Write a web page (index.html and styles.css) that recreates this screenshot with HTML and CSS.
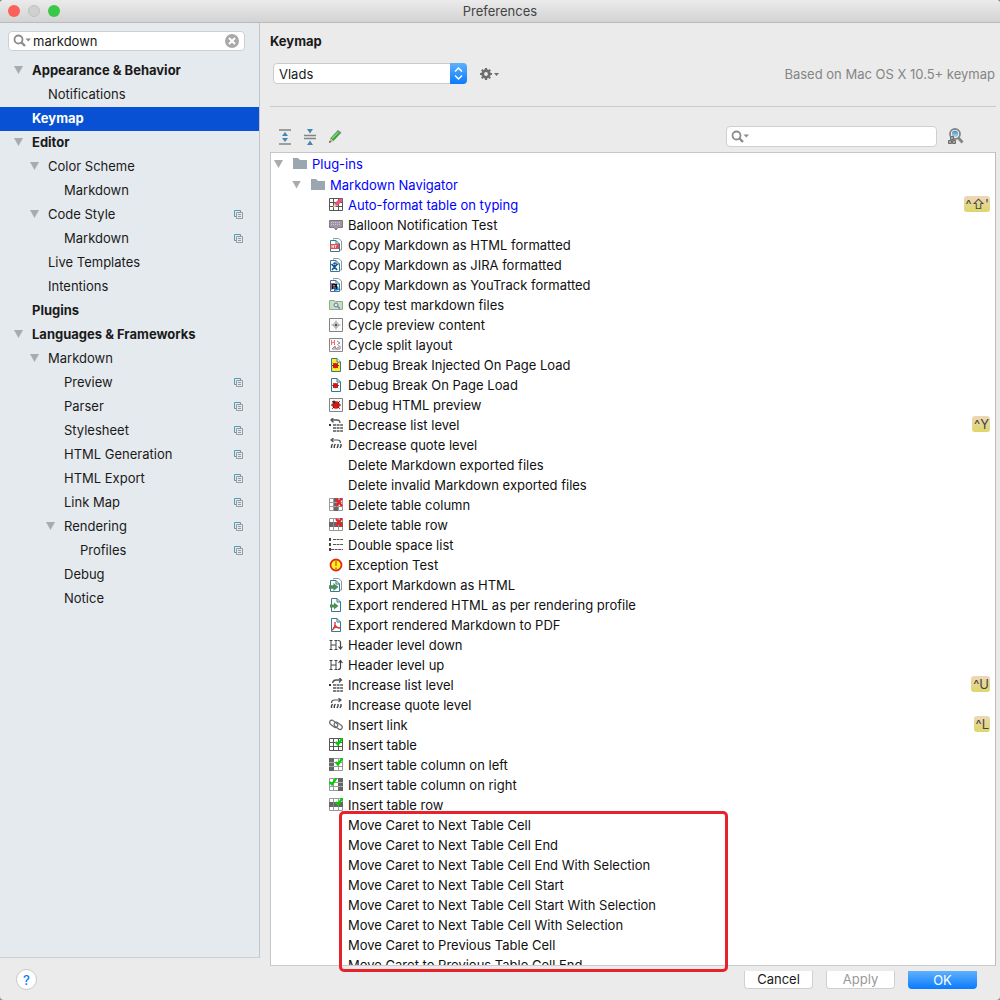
FILE: index.html
```html
<!DOCTYPE html>
<html lang="en">
<head>
<meta charset="utf-8">
<title>Preferences</title>
<link rel="stylesheet" href="styles.css">
</head>
<body>
<svg class="sprite" aria-hidden="true">
  <defs>
    <linearGradient id="lens" x1="0" y1="0" x2="0" y2="1"><stop offset="0" stop-color="#3f90c4"/><stop offset="1" stop-color="#b5dcf2"/></linearGradient>
  </defs>
  <symbol id="search" viewBox="0 0 18 14"><circle cx="5.5" cy="5.5" r="4" fill="none" stroke="#8c8c8c" stroke-width="1.800"/><path d="M8.500 8.500 12 12" stroke="#8c8c8c" stroke-width="2.400"/><path d="M12.500 4.500H18l-2.700 3z" fill="#8c8c8c"/></symbol>
  <symbol id="folder" viewBox="0 0 14 12"><path d="M0 0h5l2 2h7v9H0z" fill="#9aa7b0"/></symbol>
  <symbol id="copy" viewBox="0 0 9 9"><path d="M2 6.500H.5v-6h6V2" fill="none" stroke="#4f9dc0"/><path d="M2.500 2.500h6v6h-6zM4 4.500h3M4 6.500h3" fill="none" stroke="#9a9a9a"/></symbol>
  <symbol id="grid" viewBox="0 0 14 14"><path d="M.5.5h13v12H.5zM0 4.500h14M0 8.500h14M4.500 0v13M9.500 0v13" fill="none" stroke="#555"/></symbol>
  <symbol id="table-edit" viewBox="0 0 14 14"><use href="#grid"/><path d="m4 9 1.500-3.500L11 0l3 2.500L8 8z" fill="#e2557f"/><path d="m4 9.500 1.500-4L8 8z" fill="#f3c79b"/></symbol>
  <symbol id="balloon" viewBox="0 0 14 14"><path d="M.5 2.500h13v7H9L7 12 5 9.500H.5z" fill="#a295a6" stroke="#7b7b7b"/><path d="M2 4.500h10M2 6.500h10" stroke="#cfc3d2" stroke-dasharray="1 1"/></symbol>
  <symbol id="pages" viewBox="0 0 14 14"><path d="M4.500 1.500v-1h5L12.500 3v9H11" fill="#fff" stroke="#8a9aa2"/><path d="M1.500 2.500H7L10.500 6v7.500h-9z" fill="#fff" stroke="#35788f"/><path d="M7 2.500V6h3.500" fill="none" stroke="#35788f"/></symbol>
  <symbol id="page" viewBox="0 0 14 14"><path d="M2.500.5H8L11.500 4v9.500h-9z" fill="#fff" stroke="#35788f"/><path d="M8 .5V4h3.500" fill="none" stroke="#35788f"/></symbol>
  <symbol id="copy-html" viewBox="0 0 14 14"><use href="#pages"/><path d="M1 6h9v5H1z" fill="#dc5050"/><path d="M3 7v3m0-1.500h1.500M4.500 7v3m1-2.500h2m-1 0V10" stroke="#fff" stroke-width=".7"/></symbol>
  <symbol id="copy-jira" viewBox="0 0 14 14"><use href="#pages"/><path d="m2.500 6 3 3 3-3M5.500 9 3 12m2.500-3L8 12M5.500 7v4" stroke="#1f4f95" stroke-width="1.700" fill="none"/><circle cx="5.500" cy="5.500" r="1.200" fill="#1f4f95"/></symbol>
  <symbol id="copy-yt" viewBox="0 0 14 14"><use href="#pages"/><path d="M2 5h4l1 5-5 2z" fill="#e03ca0"/><path d="m5 10 4-2 1 4-5 1z" fill="#1679de"/><path d="M3 6h5v5H3z" fill="#111"/><path d="m4 7 1 1.500L6 7m-2 3h3" stroke="#fff" stroke-width=".6" fill="none"/></symbol>
  <symbol id="copy-test" viewBox="0 0 14 14"><path d="M.5 2.500H5l1.500 1h7v8H.5z" fill="#c9dfc4" stroke="#8ab08a"/><circle cx="7" cy="7" r="2" fill="#dce7f8" stroke="#6776a8"/><path d="m8.500 8.500 2.500 2" stroke="#6776a8" stroke-width="1.300"/></symbol>
  <symbol id="frame" viewBox="0 0 14 14"><path d="M.5.5h13v13H.5z" fill="#fafafa" stroke="#858585"/></symbol>
  <symbol id="preview" viewBox="0 0 14 14"><use href="#frame"/><circle cx="7" cy="7" r="2.500" fill="none" stroke="#aaa"/><circle cx="7" cy="7" r="1.500" fill="#555"/><path d="M7 2.500v2m0 5v2M2.500 7h2m5 0h2" stroke="#999"/></symbol>
  <symbol id="split" viewBox="0 0 14 14"><use href="#frame"/><path d="M2.500 7V2m0 3 3-1m0 3V2" stroke="#f06a78" fill="none"/><path d="m8 3 3 2-2 1m-6 5 3-3 1 3 4-3v3H3" fill="none" stroke="#7d8c99"/><path d="m5 9 4 3m-1-6 3 3" stroke="#e58b8b"/></symbol>
  <symbol id="bug" viewBox="0 0 8 8"><ellipse cx="4" cy="4" rx="3" ry="3" fill="#d81818"/><path d="m1 1 1.500 1.500M7 1 5.500 2.500M0 4h2m4 0h2M1 7l1.500-1.500M7 7 5.500 5.500" stroke="#6b0d0d" stroke-width=".8"/></symbol>
  <symbol id="debug-inj" viewBox="0 0 14 14"><path d="M2.500.5H8L11.500 4v9.500h-9z" fill="#fdee28" stroke="#35788f"/><path d="M8 .5V4h3.500" fill="#fff" stroke="#35788f"/><use href="#bug" x="3" y="4" width="7" height="7"/></symbol>
  <symbol id="debug-page" viewBox="0 0 14 14"><use href="#page"/><use href="#bug" x="3" y="4" width="7" height="7"/></symbol>
  <symbol id="debug-html" viewBox="0 0 14 14"><use href="#frame"/><use href="#bug" x="2" y="2" width="10" height="10"/><circle cx="5" cy="4" r="1.500" fill="#333"/></symbol>
  <symbol id="lines" viewBox="0 0 14 14"><path d="M0 6h2v2H0z" fill="#333"/><path d="M4 7h10M4 10h10M4 13h10" stroke="#555" stroke-width="1.400" stroke-dasharray="3 .6"/></symbol>
  <symbol id="list-dec" viewBox="0 0 14 14"><use href="#lines"/><path d="M11 5C11 3 10 2 8 2H2M4.500-.5 2 2l2.500 2.500" fill="none" stroke="#555" stroke-width="1.300"/></symbol>
  <symbol id="list-inc" viewBox="0 0 14 14"><use href="#lines"/><path d="M3.500 5C4 3 5 2 7 2h5.500M10-.5 12.500 2 10 4.500" fill="none" stroke="#555" stroke-width="1.300"/></symbol>
  <symbol id="quotes" viewBox="0 0 14 14"><path d="M3.500 6 2.500 8v2M6.300 6l-1 2v2M9 6v2L8 10M12 6v2l-1 2" fill="none" stroke="#444" stroke-width="1.400"/></symbol>
  <symbol id="quote-dec" viewBox="0 0 14 14"><use href="#quotes"/><path d="M11.500 5c0-2-1-3-3-3H2M4.500 0 2 2l2.500 2" fill="none" stroke="#555" stroke-width="1.200"/></symbol>
  <symbol id="quote-inc" viewBox="0 0 14 14"><use href="#quotes"/><path d="M2.500 5c0-2 1-3 3-3H12M9.500 0 12 2 9.500 4" fill="none" stroke="#555" stroke-width="1.200"/></symbol>
  <symbol id="table-light" viewBox="0 0 14 14"><path d="M.5.5h13v12H.5zM0 4.500h14M0 8.500h14M4.500 0v13M9.500 0v13" fill="#fff" stroke="#999"/></symbol>
  <symbol id="cross" viewBox="0 0 8 9"><path d="m1 1 6 7M7 0 1 8" stroke="#e8202a" stroke-width="2.200"/></symbol>
  <symbol id="check" viewBox="0 0 8 8"><path d="m1 4 2 2.500L7.500 0" fill="none" stroke="#0d1010" stroke-opacity="0"/><path d="m.5 4 2.500 2.500L7.500 0" fill="none" stroke="#00d000" stroke-width="2.200"/></symbol>
  <symbol id="col-del" viewBox="0 0 14 14"><use href="#table-light"/><path d="M5 0h4v13H5z" fill="#666"/><path d="M5 4.500h4m-4 4h4" stroke="#aaa"/><use href="#cross" x="6" width="8" height="9"/></symbol>
  <symbol id="row-del" viewBox="0 0 14 14"><use href="#table-light"/><path d="M0 4h14v5H0z" fill="#666"/><path d="M4.500 4v5m5-5v5" stroke="#888"/><use href="#cross" x="6" width="8" height="9"/></symbol>
  <symbol id="double" viewBox="0 0 14 14"><path d="M0 0h2v3H0zM0 5h2v3H0zM0 10h2v3H0z" fill="#444"/><path d="M4 1.500h10M4 6.500h10M2 11.500h12" stroke="#555" stroke-width="1.200" stroke-dasharray="3 .6"/></symbol>
  <symbol id="warn" viewBox="0 0 14 14"><circle cx="7" cy="7" r="5.500" fill="#ffee22" stroke="#dd2b1c" stroke-width="1.800"/><path d="M7 3v5M7 9.500v1.500" stroke="#d07a00" stroke-width="1.600"/></symbol>
  <symbol id="arrow" viewBox="0 0 9 7"><path d="M0 2h4V0l4.500 3.500L4 7V5H0z" fill="#4d8f56"/></symbol>
  <symbol id="export-md" viewBox="0 0 14 14"><use href="#pages"/><use href="#arrow" y="5" width="10" height="8"/></symbol>
  <symbol id="export-html" viewBox="0 0 14 14"><use href="#page"/><use href="#arrow" x="1" y="4" width="9" height="8"/></symbol>
  <symbol id="export-pdf" viewBox="0 0 14 14"><use href="#page"/><path d="M6 4v2c0 3-1 5-3 6m3-5c1 2 3 3 5 3M4 10c2-1 4-1 6 0" fill="none" stroke="#dd3b3b" stroke-width="1.400"/></symbol>
  <symbol id="hh" viewBox="0 0 14 14"><path d="M2 2v10M7 2v10M2 7h5M.5 2.500h3M.5 11.500h3M5.500 2.500h3M5.500 11.500h3" fill="none" stroke="#444"/></symbol>
  <symbol id="head-down" viewBox="0 0 14 14"><use href="#hh"/><path d="M9 2.500c2 0 2.500 1 2.500 2v6M9.500 8.500l2 2.500 2-2.500" fill="none" stroke="#444" stroke-width="1.200"/></symbol>
  <symbol id="head-up" viewBox="0 0 14 14"><use href="#hh"/><path d="M9 11.500c2 0 2.500-1 2.500-2v-6M9.500 5l2-2.500 2 2.500" fill="none" stroke="#444" stroke-width="1.200"/></symbol>
  <symbol id="link" viewBox="0 0 14 14"><rect x="0" y="3.500" width="9" height="4.500" rx="2.200" transform="rotate(38 4.500 6)" fill="none" stroke="#666" stroke-width="1.200"/><rect x="4.500" y="5.500" width="9" height="4.500" rx="2.200" transform="rotate(38 9 8)" fill="none" stroke="#666" stroke-width="1.200"/></symbol>
  <symbol id="table-ins" viewBox="0 0 14 14"><use href="#grid"/><use href="#check" x="6" y="0" width="8" height="8"/></symbol>
  <symbol id="col-left" viewBox="0 0 14 14"><use href="#table-light"/><path d="M0 0h5v13H0z" fill="#666"/><path d="M0 4.500h5m-5 4h5" stroke="#aaa"/><use href="#check" x="6" y="0" width="8" height="8"/></symbol>
  <symbol id="col-right" viewBox="0 0 14 14"><use href="#table-light"/><path d="M9 0h5v13H9z" fill="#666"/><path d="M9 4.500h5m-5 4h5" stroke="#aaa"/><use href="#check" x="0" y="0" width="8" height="8"/></symbol>
  <symbol id="row-ins" viewBox="0 0 14 14"><use href="#table-light"/><path d="M0 4h14v5H0z" fill="#666"/><path d="M4.500 4v5m5-5v5" stroke="#888"/><use href="#check" x="6" y="0" width="8" height="8"/></symbol>
</svg>

<div class="window">
  <header class="titlebar">
    <div class="lights"><span class="light close"></span><span class="light minimize"></span><span class="light zoom"></span></div>
    <h1 class="title">Preferences</h1>
  </header>

  <div class="content">
    <nav class="sidebar" aria-label="Settings">
      <div class="search-box side-search">
        <svg class="glass"><use href="#search"/></svg>
        <input type="text" value="markdown" aria-label="Search settings">
        <button class="clear" type="button" aria-label="Clear"><svg viewBox="0 0 14 14"><circle cx="7" cy="7" r="7" fill="#a9a9a9"/><path d="m4 4 6 6m0-6-6 6" stroke="#fff" stroke-width="2"/></svg></button>
      </div>
      <ul class="settings">
        <li class="item open bold"><span>Appearance &amp; Behavior</span></li>
        <li class="item l2"><span>Notifications</span></li>
        <li class="item bold selected"><span>Keymap</span></li>
        <li class="item open bold"><span>Editor</span></li>
        <li class="item l2 open"><span>Color Scheme</span></li>
        <li class="item l3"><span>Markdown</span></li>
        <li class="item l2 open"><span>Code Style</span><svg class="copy"><use href="#copy"/></svg></li>
        <li class="item l3"><span>Markdown</span><svg class="copy"><use href="#copy"/></svg></li>
        <li class="item l2"><span>Live Templates</span></li>
        <li class="item l2"><span>Intentions</span></li>
        <li class="item bold"><span>Plugins</span></li>
        <li class="item open bold"><span>Languages &amp; Frameworks</span></li>
        <li class="item l2 open"><span>Markdown</span></li>
        <li class="item l3"><span>Preview</span><svg class="copy"><use href="#copy"/></svg></li>
        <li class="item l3"><span>Parser</span><svg class="copy"><use href="#copy"/></svg></li>
        <li class="item l3"><span>Stylesheet</span><svg class="copy"><use href="#copy"/></svg></li>
        <li class="item l3"><span>HTML Generation</span><svg class="copy"><use href="#copy"/></svg></li>
        <li class="item l3"><span>HTML Export</span><svg class="copy"><use href="#copy"/></svg></li>
        <li class="item l3"><span>Link Map</span><svg class="copy"><use href="#copy"/></svg></li>
        <li class="item l3 open"><span>Rendering</span><svg class="copy"><use href="#copy"/></svg></li>
        <li class="item l4"><span>Profiles</span><svg class="copy"><use href="#copy"/></svg></li>
        <li class="item l3"><span>Debug</span></li>
        <li class="item l3"><span>Notice</span></li>
      </ul>
    </nav>

    <main class="panel">
      <h2 class="heading">Keymap</h2>
      <div class="scheme">
        <div class="combo">
          <select aria-label="Keymap scheme"><option>Vlads</option></select>
          <svg class="combo-cap" viewBox="0 0 17 20"><path d="m5 8 3.500-3.500L12 8M5 12l3.500 3.500L12 12" fill="none" stroke="#fff" stroke-width="1.500"/></svg>
        </div>
        <button class="plain" type="button" aria-label="Scheme actions">
          <svg width="20" height="14" viewBox="0 0 20 14"><circle cx="7" cy="7" r="3.300" fill="none" stroke="#6e6e6e" stroke-width="2.800"/><path d="M7 1v2M7 11v2M1 7h2M11 7h2M2.800 2.800l1.400 1.400M9.800 9.800l1.400 1.400M2.800 11.200l1.400-1.400M9.800 4.200l1.400-1.400" stroke="#6e6e6e" stroke-width="2.200"/><path d="M15 6h5l-2.500 3z" fill="#6e6e6e"/></svg>
        </button>
        <span class="based">Based on Mac OS X 10.5+ keymap</span>
      </div>
      <div class="toolbar">
        <button class="plain" type="button" aria-label="Expand all"><svg width="15" height="16" viewBox="0 0 15 16"><path d="M1 1h12M1 15h12" stroke="#858585" stroke-width="1.600"/><path d="m4 7 3-4 3 4zM4 9l3 4 3-4z" fill="#4189b5"/></svg></button>
        <button class="plain" type="button" aria-label="Collapse all"><svg width="15" height="16" viewBox="0 0 15 16"><path d="M1 6.500h12M1 9.500h12" stroke="#858585" stroke-width="1.600"/><path d="M4 0h6L7 4.500zM4 16h6l-3-4.500z" fill="#4189b5"/></svg></button>
        <button class="plain" type="button" aria-label="Edit"><svg width="15" height="16" viewBox="0 0 15 16"><path d="m1.500 13 1-4L9.500 1.500 13 4 5.500 12z" fill="#3f9e45"/><path d="m4 9.500 7-7" stroke="#7fd47f" stroke-width="1.600"/><path d="m10 1 3.500 2.500L12 5 8.800 2.300z" fill="#7f8f83"/><path d="m1.500 13 1-4 3 2.700z" fill="#e5b27b"/><path d="m1 14 .7-2.300L3.300 13z" fill="#444"/></svg></button>
        <div class="search-box action-search">
          <svg class="glass"><use href="#search"/></svg>
          <input type="text" aria-label="Search actions">
        </div>
        <button class="plain" type="button" aria-label="Find by shortcut"><svg width="17" height="17" viewBox="0 0 17 17"><circle cx="8" cy="6" r="5" fill="#f4f4f4" stroke="#858585" stroke-width="1.800"/><circle cx="8" cy="6" r="3.200" fill="url(#lens)"/><path d="m11 9.500 4.500 5" stroke="#858585" stroke-width="2.800"/><path d="M3.500 8.500h3v3h-3zM1.500 12.500h3v3h-3zM5.500 12.500h3v3h-3z" fill="#aaa" stroke="#6b6b6b"/></svg></button>
      </div>
      <div class="actions">
        <ul class="tree">
          <li class="row root"><svg class="icon"><use href="#folder"/></svg><span class="name">Plug-ins</span></li>
          <li class="row group"><svg class="icon"><use href="#folder"/></svg><span class="name">Markdown Navigator</span></li>
          <li class="row changed"><svg class="icon"><use href="#table-edit"/></svg><span class="name">Auto-format table on typing</span><kbd>^⇧'</kbd></li>
          <li class="row"><svg class="icon"><use href="#balloon"/></svg><span class="name">Balloon Notification Test</span></li>
          <li class="row"><svg class="icon"><use href="#copy-html"/></svg><span class="name">Copy Markdown as HTML formatted</span></li>
          <li class="row"><svg class="icon"><use href="#copy-jira"/></svg><span class="name">Copy Markdown as JIRA formatted</span></li>
          <li class="row"><svg class="icon"><use href="#copy-yt"/></svg><span class="name">Copy Markdown as YouTrack formatted</span></li>
          <li class="row"><svg class="icon"><use href="#copy-test"/></svg><span class="name">Copy test markdown files</span></li>
          <li class="row"><svg class="icon"><use href="#preview"/></svg><span class="name">Cycle preview content</span></li>
          <li class="row"><svg class="icon"><use href="#split"/></svg><span class="name">Cycle split layout</span></li>
          <li class="row"><svg class="icon"><use href="#debug-inj"/></svg><span class="name">Debug Break Injected On Page Load</span></li>
          <li class="row"><svg class="icon"><use href="#debug-page"/></svg><span class="name">Debug Break On Page Load</span></li>
          <li class="row"><svg class="icon"><use href="#debug-html"/></svg><span class="name">Debug HTML preview</span></li>
          <li class="row"><svg class="icon"><use href="#list-dec"/></svg><span class="name">Decrease list level</span><kbd>^Y</kbd></li>
          <li class="row"><svg class="icon"><use href="#quote-dec"/></svg><span class="name">Decrease quote level</span></li>
          <li class="row"><svg class="icon"></svg><span class="name">Delete Markdown exported files</span></li>
          <li class="row"><svg class="icon"></svg><span class="name">Delete invalid Markdown exported files</span></li>
          <li class="row"><svg class="icon"><use href="#col-del"/></svg><span class="name">Delete table column</span></li>
          <li class="row"><svg class="icon"><use href="#row-del"/></svg><span class="name">Delete table row</span></li>
          <li class="row"><svg class="icon"><use href="#double"/></svg><span class="name">Double space list</span></li>
          <li class="row"><svg class="icon"><use href="#warn"/></svg><span class="name">Exception Test</span></li>
          <li class="row"><svg class="icon"><use href="#export-md"/></svg><span class="name">Export Markdown as HTML</span></li>
          <li class="row"><svg class="icon"><use href="#export-html"/></svg><span class="name">Export rendered HTML as per rendering profile</span></li>
          <li class="row"><svg class="icon"><use href="#export-pdf"/></svg><span class="name">Export rendered Markdown to PDF</span></li>
          <li class="row"><svg class="icon"><use href="#head-down"/></svg><span class="name">Header level down</span></li>
          <li class="row"><svg class="icon"><use href="#head-up"/></svg><span class="name">Header level up</span></li>
          <li class="row"><svg class="icon"><use href="#list-inc"/></svg><span class="name">Increase list level</span><kbd>^U</kbd></li>
          <li class="row"><svg class="icon"><use href="#quote-inc"/></svg><span class="name">Increase quote level</span></li>
          <li class="row"><svg class="icon"><use href="#link"/></svg><span class="name">Insert link</span><kbd>^L</kbd></li>
          <li class="row"><svg class="icon"><use href="#table-ins"/></svg><span class="name">Insert table</span></li>
          <li class="row"><svg class="icon"><use href="#col-left"/></svg><span class="name">Insert table column on left</span></li>
          <li class="row"><svg class="icon"><use href="#col-right"/></svg><span class="name">Insert table column on right</span></li>
          <li class="row"><svg class="icon"><use href="#row-ins"/></svg><span class="name">Insert table row</span></li>
          <li class="row"><svg class="icon"></svg><span class="name">Move Caret to Next Table Cell</span></li>
          <li class="row"><svg class="icon"></svg><span class="name">Move Caret to Next Table Cell End</span></li>
          <li class="row"><svg class="icon"></svg><span class="name">Move Caret to Next Table Cell End With Selection</span></li>
          <li class="row"><svg class="icon"></svg><span class="name">Move Caret to Next Table Cell Start</span></li>
          <li class="row"><svg class="icon"></svg><span class="name">Move Caret to Next Table Cell Start With Selection</span></li>
          <li class="row"><svg class="icon"></svg><span class="name">Move Caret to Next Table Cell With Selection</span></li>
          <li class="row"><svg class="icon"></svg><span class="name">Move Caret to Previous Table Cell</span></li>
          <li class="row"><svg class="icon"></svg><span class="name">Move Caret to Previous Table Cell End</span></li>
        </ul>
        <div class="highlight"></div>
      </div>
    </main>
  </div>

  <footer class="footer">
    <button class="help" type="button" aria-label="Help">?</button>
    <button class="btn" type="button">Cancel</button>
    <button class="btn" type="button" disabled>Apply</button>
    <button class="btn primary" type="button">OK</button>
  </footer>
</div>
</body>
</html>
```
FILE: styles.css
```css
* { box-sizing: border-box; }
body {
  margin: 0;
  background: #8c8c8c;
  color: #1a1a1a;
  font: 13px/20px Inter, "Liberation Sans", sans-serif;
}
button, input, select { font: inherit; color: inherit; margin: 0; padding: 0; }
ul { list-style: none; margin: 0; padding: 0; }
svg { display: block; flex: none; }
.sprite { position: absolute; width: 0; height: 0; }

.window {
  display: flex;
  flex-direction: column;
  height: 100vh;
  overflow: hidden;
  background: #ebebeb;
  border-radius: 4px;
}

/* Title bar */
.titlebar {
  display: grid;
  grid-template-columns: 1fr auto 1fr;
  align-items: center;
  height: 23px;
  padding: 0 8px;
  background: linear-gradient(#ebebeb, #d3d3d3);
  border-bottom: 1px solid #bababa;
}
.lights { display: flex; gap: 8px; }
.light { width: 12px; height: 12px; border-radius: 50%; }
.close { background: #fc605b; }
.minimize { background: #d0d0d0; border: 1px solid #c0c0c0; }
.zoom { background: #3ac84a; }
.title { margin: 0; font-size: 13px; font-weight: 400; color: #444; }

.content { display: flex; flex: 1; min-height: 0; }

/* Settings tree */
.sidebar {
  flex: none;
  width: 260px;
  margin-bottom: 8px;
  background: #e5eaee;
  border-right: 1px solid #c3c5c7;
  border-bottom: 1px solid #cfcfcf;
}
.search-box {
  display: flex;
  align-items: center;
  gap: 2px;
  background: #fff;
  border: 1px solid #cdcfd0;
  border-radius: 4px;
}
.search-box input {
  flex: 1;
  min-width: 0;
  height: 18px;
  border: 0;
  background: none;
  outline: 0;
}
.glass { width: 18px; height: 14px; }
.side-search { height: 20px; margin: 8px 14px 8px 8px; padding: 0 5px 0 4px; }
.clear { width: 14px; height: 14px; border: 0; background: none; }
.item {
  display: flex;
  align-items: center;
  gap: 9px;
  height: 24px;
  padding: 0 16px 2px 14px;
}
.item::before { content: ""; flex: none; width: 9px; height: 8px; }
.item.open::before, .root::before, .group::before {
  background: #a9acae;
  clip-path: polygon(0 0, 100% 0, 50% 100%);
}
.item span { flex: 1; }
.item.l2 { padding-left: 30px; }
.item.l3 { padding-left: 46px; }
.item.l4 { padding-left: 62px; }
.bold { font-weight: 700; }
.selected { background: #0850d4; color: #fff; }
.copy { width: 9px; height: 9px; }

/* Keymap panel */
.panel {
  flex: 1;
  min-width: 0;
  display: flex;
  flex-direction: column;
  padding: 8px 4px 0 10px;
}
.heading { margin: 0; font-size: 13px; font-weight: 700; }
.scheme {
  display: flex;
  align-items: center;
  gap: 12px;
  height: 56px;
  padding: 0 1px 10px 3px;
  border-bottom: 1px solid #cbcbcb;
}
.combo { position: relative; width: 194px; }
.combo select {
  width: 100%;
  height: 21px;
  padding: 0 20px 0 5px;
  appearance: none;
  background: #fff;
  border: 1px solid #cbcbcb;
  border-radius: 4px;
}
.combo-cap {
  position: absolute;
  top: 0;
  right: 0;
  width: 17px;
  height: 21px;
  background: linear-gradient(#5fb1fb, #0a7aff);
  border-radius: 0 4px 4px 0;
  pointer-events: none;
}
.plain { display: flex; border: 0; background: none; }
.based { margin-left: auto; color: #858585; }
.toolbar {
  display: flex;
  align-items: center;
  gap: 10px;
  height: 45px;
  padding: 14px 32px 0 8px;
}
.action-search { width: 211px; height: 21px; margin-left: auto; padding: 0 4px; }
.actions {
  position: relative;
  flex: 1;
  min-height: 0;
  border-top: 1px solid #c6c6c6;
  border-right: 1px solid #bdbdbd;
  border-bottom: 1px solid #cbcbcb;
}
.tree {
  height: 100%;
  overflow: hidden;
  padding-top: 1px;
  background: #fff;
  border-left: 1px solid #c6c6c6;
  color: #111;
}
.row {
  display: flex;
  align-items: center;
  gap: 5px;
  height: 20px;
  padding: 0 5px 0 58px;
}
.root::before, .group::before { content: ""; width: 9px; height: 8px; margin-right: 5px; }
.root { padding-left: 3px; }
.group { height: 21px; padding-left: 21px; }
.root, .group, .changed .name { color: #00f; }
.icon { width: 14px; height: 14px; }
.root .icon, .group .icon { height: 12px; }
.name { flex: 1; white-space: nowrap; }
kbd {
  height: 16px;
  margin-bottom: 2px;
  padding: 0 1px 0 2px;
  background: linear-gradient(#efd6b8, #dcd76a);
  border-radius: 3px;
  color: #444;
  font: 13px/17px Inter, "DejaVu Sans", sans-serif;
}
.highlight {
  position: absolute;
  top: 658px;
  bottom: -7px;
  left: 69px;
  width: 389px;
  border: 3px solid #e8222b;
  border-radius: 5px;
}

/* Buttons */
.footer {
  display: flex;
  align-items: center;
  gap: 13px;
  height: 34px;
  padding: 0 23px 7px 16px;
}
.help {
  width: 21px;
  height: 21px;
  margin-right: auto;
  background: #fff;
  border: 1px solid #c8c8c8;
  border-radius: 50%;
  color: #0a7aff;
  font-weight: 500;
  line-height: 18px;
}
.btn {
  width: 69px;
  height: 18px;
  background: #fff;
  border: 1px solid #d0d0d0;
  border-top: 0;
  border-radius: 0 0 4px 4px;
  line-height: 16px;
}
.btn:disabled { color: #999; }
.primary { background: linear-gradient(#5fb1fb, #0a7aff); border: 0; color: #fff; }
```
